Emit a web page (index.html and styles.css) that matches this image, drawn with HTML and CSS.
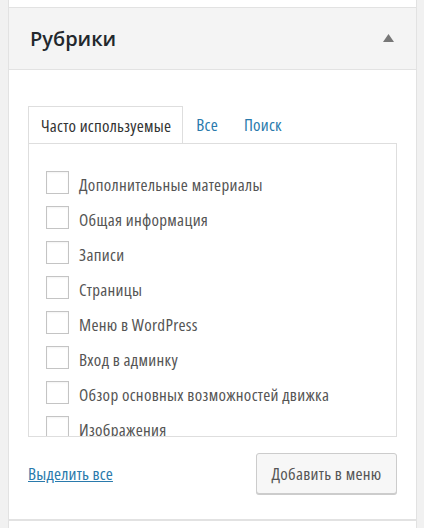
FILE: index.html
```html
<!DOCTYPE html>
<html lang="ru">
<head>
    <meta charset="UTF-8">
    <title>Рубрики</title>
    <link rel="stylesheet" href="styles.css">
</head>
<body>
    <div id="wrap">
        <div class="prev"></div>
        <div class="section">
            <div class="section-title">
                <h3>Рубрики</h3>
                <svg class="toggle" width="11" height="8" viewBox="0 0 11 8"><polygon points="5.5,0 11,8 0,8" fill="#777"/></svg>
            </div>
            <div class="section-body">
                <ul class="tabs">
                    <li class="active">Часто используемые</li>
                    <li><a href="#">Все</a></li>
                    <li><a href="#">Поиск</a></li>
                </ul>
                <div class="panel">
                    <ul class="checklist">
                        <li><span class="box"></span><span class="label">Дополнительные материалы</span></li>
                        <li><span class="box"></span><span class="label">Общая информация</span></li>
                        <li><span class="box"></span><span class="label">Записи</span></li>
                        <li><span class="box"></span><span class="label">Страницы</span></li>
                        <li><span class="box"></span><span class="label">Меню в WordPress</span></li>
                        <li><span class="box"></span><span class="label">Вход в админку</span></li>
                        <li><span class="box"></span><span class="label">Обзор основных возможностей движка</span></li>
                        <li><span class="box"></span><span class="label">Изображения</span></li>
                    </ul>
                </div>
                <div class="actions">
                    <a href="#" class="select-all">Выделить все</a>
                    <button class="add">Добавить в меню</button>
                </div>
            </div>
        </div>
        <div class="next"></div>
    </div>
</body>
</html>
```

FILE: styles.css
```css
html, body{
    margin: 0;
    padding: 0;
    background: #f1f1f1;
    height: 100%;
    overflow: hidden;
}
#wrap{
    margin: 0 7px 0 8px;
    font-family: "Open Sans", "Noto Sans", sans-serif;
}
.prev{
    height: 7px;
    background: #fff;
    border: 1px solid #e2e2e2;
    border-top: none;
}
.section{
    border: 1px solid #e2e2e2;
    border-top: none;
    background: #fff;
}
.section-title{
    height: 61px;
    background: #f4f4f4;
    border-bottom: 1px solid #e2e2e2;
    display: flex;
    align-items: center;
    justify-content: space-between;
    padding: 0 22px 0 21px;
}
.section-title h3{
    margin: 0;
    font-size: 20px;
    font-weight: 600;
    color: #23282d;
}
.toggle{
    display: block;
    margin-top: -2px;
}
.section-body{
    padding: 36px 19px 25px 19px;
}
.tabs{
    display: flex;
    margin: 0;
    padding: 0;
    list-style: none;
    font-stretch: 75%;
    font-size: 17px;
    letter-spacing: 0.25px;
    position: relative;
    z-index: 1;
}
.tabs li{
    height: 36px;
    line-height: 38px;
    padding: 0 13px;
}
.tabs li.active{
    padding: 0 11px 0 12px;
    background: #fff;
    border: 1px solid #dedede;
    border-bottom: none;
    color: #333;
}
.tabs a{
    color: #2a7aac;
    text-decoration: none;
}
.panel{
    height: 292px;
    border: 1px solid #dedede;
    overflow: hidden;
    background: #fff;
}
.checklist{
    list-style: none;
    margin: 0;
    padding: 27px 0 0 17px;
}
.checklist li{
    display: flex;
    align-items: flex-start;
    height: 35px;
    font-size: 17px;
    font-stretch: 75%;
    letter-spacing: 0.3px;
    color: #555;
}
.checklist .box{
    width: 21px;
    height: 21px;
    border: 1px solid #c4c4c4;
    box-shadow: inset 0 1px 2px rgba(0,0,0,0.05);
    margin-right: 10px;
    flex-shrink: 0;
}
.checklist .label{
    line-height: 23px;
    padding-top: 2px;
}
.actions{
    display: flex;
    justify-content: space-between;
    align-items: center;
    margin-top: 16px;
}
.select-all{
    font-size: 17px;
    font-stretch: 75%;
    letter-spacing: 0.2px;
    color: #2a7aac;
    text-decoration: underline;
}
.add{
    width: 141px;
    height: 41px;
    font-family: "Open Sans", "Noto Sans", sans-serif;
    font-stretch: 75%;
    font-size: 17px;
    letter-spacing: 0.3px;
    color: #555;
    background: #f7f7f7;
    border: 1px solid #cccccc;
    border-radius: 3px;
    box-shadow: 0 1px 0 #cccccc;
    padding: 0;
}
.next{
    height: 7px;
    background: #fff;
    border: 1px solid #e2e2e2;
    border-bottom: none;
}
```
